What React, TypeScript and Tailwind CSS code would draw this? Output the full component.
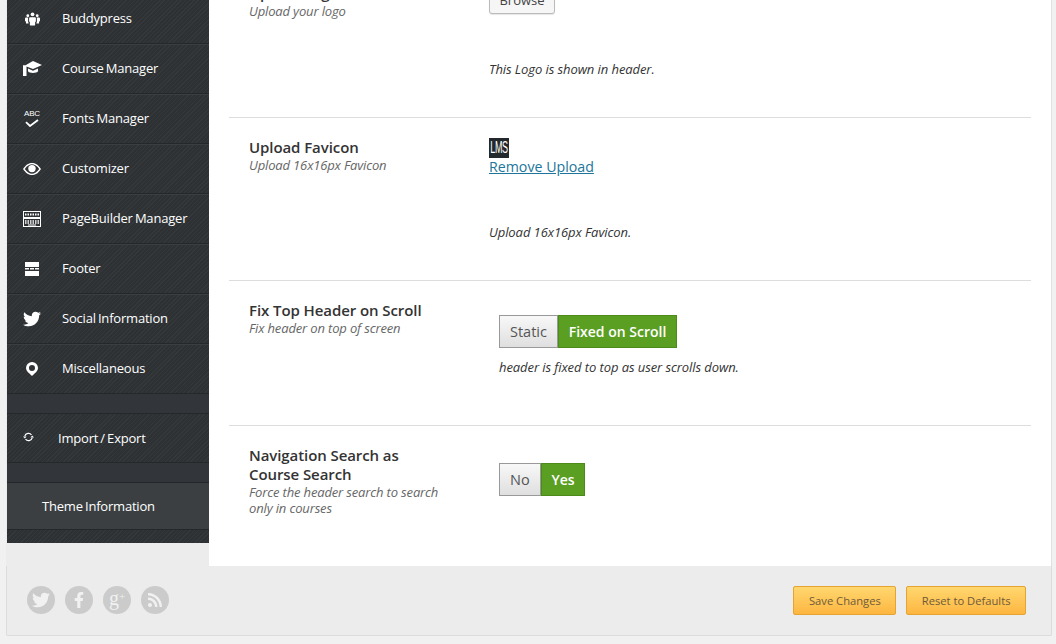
import { FaTwitter, FaFacebookF, FaRss } from "react-icons/fa";

const stripes =
  "bg-[#2f3336] bg-[repeating-linear-gradient(135deg,#34383b_0px,#34383b_1px,#2d3134_1px,#2d3134_3px)]";

function PeopleIcon() {
  return (
    <svg viewBox="0 0 16 14" className="w-[15px] h-[14px] fill-white">
      <circle cx="8" cy="2" r="2" />
      <circle cx="3" cy="3.4" r="1.5" />
      <circle cx="13" cy="3.4" r="1.5" />
      <path d="M5.4 5h5.2c.6 0 1 .4 1 1v3.5c0 .5-.4.8-.8.8v2.7c0 .5-.4 1-1 1H6.2c-.6 0-1-.5-1-1v-2.7c-.4 0-.8-.3-.8-.8V6c0-.6.4-1 1-1z" />
      <path d="M1 5.4h2.6c-.2.2-.3.5-.3.8v3.6c0 .4.2.8.5 1v1H1.6c-.4 0-.6-.3-.6-.6V9.6c-.5 0-1-.3-1-.8V6.4c0-.6.4-1 1-1z" />
      <path d="M15 5.4h-2.6c.2.2.3.5.3.8v3.6c0 .4-.2.8-.5 1v1h2.2c.4 0 .6-.3.6-.6V9.6c.5 0 1-.3 1-.8V6.4c0-.6-.4-1-1-1z" />
    </svg>
  );
}

function CapIcon() {
  return (
    <svg viewBox="0 0 19 15" className="w-[19px] h-[15px] fill-white">
      <path d="M10 0l9 4-9 4-6.500-2.600V15H0V4.300h2.500z" />
      <path d="M5 7.500l5 2.200 5-2.200v2.800c-1.200 2.100-8.800 2.100-10 0z" />
    </svg>
  );
}

function AbcIcon() {
  return (
    <div className="flex flex-col items-center w-[18px] text-white">
      <span className="text-[8px] leading-[8px] font-['Liberation_Sans',sans-serif]">ABC</span>
      <svg viewBox="0 0 14 8" className="w-[14px] h-[8px] mt-[1px]">
        <path d="M1 3.200 5 7l8-6" fill="none" stroke="white" strokeWidth="1.8" />
      </svg>
    </div>
  );
}

function EyeIcon() {
  return (
    <svg viewBox="0 0 18 12" className="w-[18px] h-[12px]">
      <path
        fill="white"
        fillRule="evenodd"
        d="M0 6c3-4.500 6-6 9-6s6 1.500 9 6c-3 4.500-6 6-9 6S3 10.500 0 6zm1.800 0C4 9.200 6.500 10.700 9 10.700s5-1.500 7.200-4.700C14 2.800 11.500 1.300 9 1.300S4 2.800 1.800 6z"
      />
      <circle cx="9" cy="5.600" r="3.700" fill="white" />
    </svg>
  );
}

function KeyboardIcon() {
  return (
    <svg viewBox="0 0 18 16" className="w-[18px] h-[16px]">
      <rect x="0.5" y="0.5" width="17" height="6" fill="none" stroke="white" />
      <rect x="0.5" y="7.500" width="17" height="8" fill="none" stroke="white" />
      <path d="M2 3.500h14" stroke="white" strokeWidth="2" strokeDasharray="1.500 1" />
      <path d="M2 10h14M2 12h14" stroke="white" strokeWidth="1.400" strokeDasharray="1.500 1" />
      <path d="M5 14h8" stroke="white" />
    </svg>
  );
}

function FooterIcon() {
  return (
    <svg viewBox="0 0 14 14" className="w-[14px] h-[14px] fill-white">
      <rect x="0" y="0" width="14" height="5" />
      <rect x="0" y="6" width="4" height="1.500" />
      <rect x="5" y="6" width="4" height="1.500" />
      <rect x="10" y="6" width="4" height="1.500" />
      <rect x="0" y="9" width="14" height="5" />
    </svg>
  );
}

function PinIcon() {
  return (
    <svg viewBox="0 0 12 14" className="w-[12px] h-[14px]">
      <path
        fillRule="evenodd"
        fill="white"
        d="M6 0a6 6 0 0 1 6 6c0 2.600-2 4.400-3.400 5.600L6 14l-2.600-2.400C2 10.400 0 8.600 0 6a6 6 0 0 1 6-6zm0 3a3 3 0 1 0 0 6 3 3 0 0 0 0-6z"
      />
    </svg>
  );
}

function SyncIcon() {
  return (
    <svg viewBox="0 0 11 10" className="w-[11px] h-[10px]" fill="none" stroke="white" strokeWidth="1.200">
      <path d="M1.800 4.200A3.700 3.700 0 0 1 8.500 3" />
      <path d="M9.200 5.800A3.700 3.700 0 0 1 2.500 7" />
      <path d="M0 4.500h3.600L1.800 6.500z" fill="white" stroke="none" />
      <path d="M11 5.500H7.400l1.800-2z" fill="white" stroke="none" />
    </svg>
  );
}

const menu = [
  { label: "Buddypress", icon: <PeopleIcon /> },
  { label: "Course Manager", icon: <CapIcon /> },
  { label: "Fonts Manager", icon: <AbcIcon /> },
  { label: "Customizer", icon: <EyeIcon /> },
  { label: "PageBuilder Manager", icon: <KeyboardIcon /> },
  { label: "Footer", icon: <FooterIcon /> },
  { label: "Social Information", icon: <FaTwitter className="text-white text-[18px]" /> },
  { label: "Miscellaneous", icon: <PinIcon /> },
];

function Sidebar() {
  return (
    <aside className={`w-[202px] h-[543px] shrink-0 overflow-hidden text-white text-[13px] tracking-[-0.2px] [word-spacing:-1px] ${stripes}`}>
      <div className="-mt-[6px]">
        {menu.map((item) => (
          <div
            key={item.label}
            className="h-[50px] flex items-center border-b border-[#25282b] shadow-[0_1px_0_#3a3e41]"
          >
            <div className="w-[50px] mr-[5px] flex justify-center shrink-0">{item.icon}</div>
            <span>{item.label}</span>
          </div>
        ))}
        <div className="h-[19px] bg-[#32363a]" />
        <div className="h-[50px] pt-[1px] flex items-center border-y border-[#25282b]">
          <div className="w-[51px] pl-[16px] shrink-0 -mt-[4px]">
            <SyncIcon />
          </div>
          <span>Import / Export</span>
        </div>
        <div className="h-[19px] bg-[#32363a]" />
        <div className="h-[48px] pt-[2px] flex items-center pl-[35px] bg-[#3b3f42] border-y border-[#25282b]">
          Theme Information
        </div>
      </div>
    </aside>
  );
}

function Label({ title, desc }: { title: string; desc: string }) {
  return (
    <div className="w-[260px] shrink-0 pl-[20px]">
      <h3 className="max-w-[180px] text-[15px] leading-[19px] font-semibold tracking-[-0.08px] text-[#333]">{title}</h3>
      <p className="max-w-[195px] text-[13px] leading-[16px] italic tracking-[-0.15px] text-[#666]">{desc}</p>
    </div>
  );
}

function Toggle({ off, on }: { off: string; on: string }) {
  return (
    <div className="flex h-[33px] text-[14px]">
      <div className="px-[10px] flex items-center border border-[#999] bg-linear-to-b from-[#f8f8f8] to-[#dfdfdf] text-[14.5px] text-[#555]">
        {off}
      </div>
      <div className="px-[9.75px] flex items-center font-semibold border border-[#4d8a1c] bg-[#5a9e22] text-white">
        {on}
      </div>
    </div>
  );
}

function Note({ children }: { children: string }) {
  return <p className="text-[13px] leading-[16px] italic tracking-[-0.08px] text-[#333]">{children}</p>;
}

function Content() {
  return (
    <main className="flex-1 bg-white border-r border-[#e0e0e0] overflow-hidden px-[20px]">
      {/* logo row, scrolled partly off the top */}
      <section className="h-[118px] flex border-b border-[#ddd]">
        <div className="-mt-[16px]">
          <Label title="Upload Logo" desc="Upload your logo" />
        </div>
        <div className="-mt-[13px]">
          <button className="h-[26px] w-[66px] border border-[#bbb] rounded-[3px] bg-[#f6f6f6] text-[13px] text-[#444] shadow-[0_1px_1px_rgba(0,0,0,0.1)]">
            Browse
          </button>
          <div className="mt-[47px]">
            <Note>This Logo is shown in header.</Note>
          </div>
        </div>
      </section>

      <section className="h-[163px] flex pt-[20px] border-b border-[#ddd]">
        <Label title="Upload Favicon" desc="Upload 16x16px Favicon" />
        <div>
          <div className="w-[20px] h-[20px] flex items-center justify-center bg-[#22282b] text-white text-[9px] leading-[9px] tracking-[-0.3px] font-['Liberation_Sans',sans-serif]">
            <span className="block scale-y-[1.9]">LMS</span>
          </div>
          <a className="block -mt-[1px] text-[14.2px] leading-[19px] text-[#21759b] underline">Remove Upload</a>
          <div className="mt-[48px]">
            <Note>Upload 16x16px Favicon.</Note>
          </div>
        </div>
      </section>

      <section className="h-[145px] flex pt-[20px] border-b border-[#ddd]">
        <Label title="Fix Top Header on Scroll" desc="Fix header on top of screen" />
        <div className="pl-[10px] pt-[14px]">
          <Toggle off="Static" on="Fixed on Scroll" />
          <div className="mt-[11px]">
            <Note>header is fixed to top as user scrolls down.</Note>
          </div>
        </div>
      </section>

      <section className="flex pt-[20px]">
        <Label title="Navigation Search as Course Search" desc="Force the header search to search only in courses" />
        <div className="pl-[10px] pt-[17px]">
          <Toggle off="No" on="Yes" />
        </div>
      </section>
    </main>
  );
}

const socials = [
  { name: "twitter", icon: <FaTwitter className="text-[18px]" /> },
  { name: "facebook", icon: <FaFacebookF className="text-[16px]" /> },
  {
    name: "google",
    icon: (
      <span className="text-[20px] leading-[20px] -mt-[4px] font-['Liberation_Serif',serif]">
        g<sup className="text-[11px] -top-[5px]">+</sup>
      </span>
    ),
  },
  { name: "rss", icon: <FaRss className="text-[16px]" /> },
];

function FooterBar() {
  return (
    <footer className="h-[70px] flex items-center justify-between pl-[20px] pr-[25px] bg-[#ececec] border border-t-0 border-[#dcdcdc] rounded-b-[2px]">
      <div className="flex gap-[10px] -mt-[1px]">
        {socials.map((s) => (
          <div
            key={s.name}
            className="w-[28px] h-[28px] rounded-full bg-[#cbcbcb] text-[#f1f1f1] flex items-center justify-center"
          >
            {s.icon}
          </div>
        ))}
      </div>
      <div className="flex gap-[10px]">
        {["Save Changes", "Reset to Defaults"].map((label) => (
          <button
            key={label}
            className="h-[29px] pt-[1px] px-[14.5px] rounded-[2px] border border-[#e5a32f] bg-linear-to-b from-[#ffd76e] to-[#fdb63f] text-[11.2px] text-[#6e5a3a]"
          >
            {label}
          </button>
        ))}
      </div>
    </footer>
  );
}

export default function App() {
  return (
    <div className="h-[644px] w-[1056px] overflow-hidden bg-[#f1f1f1] font-['Open_Sans',sans-serif]">
      <div className="ml-[6px] w-[1046px] bg-[#ececec]">
        <div className="flex h-[566px] pl-[1px]">
          <Sidebar />
          <Content />
        </div>
        <FooterBar />
      </div>
    </div>
  );
}
